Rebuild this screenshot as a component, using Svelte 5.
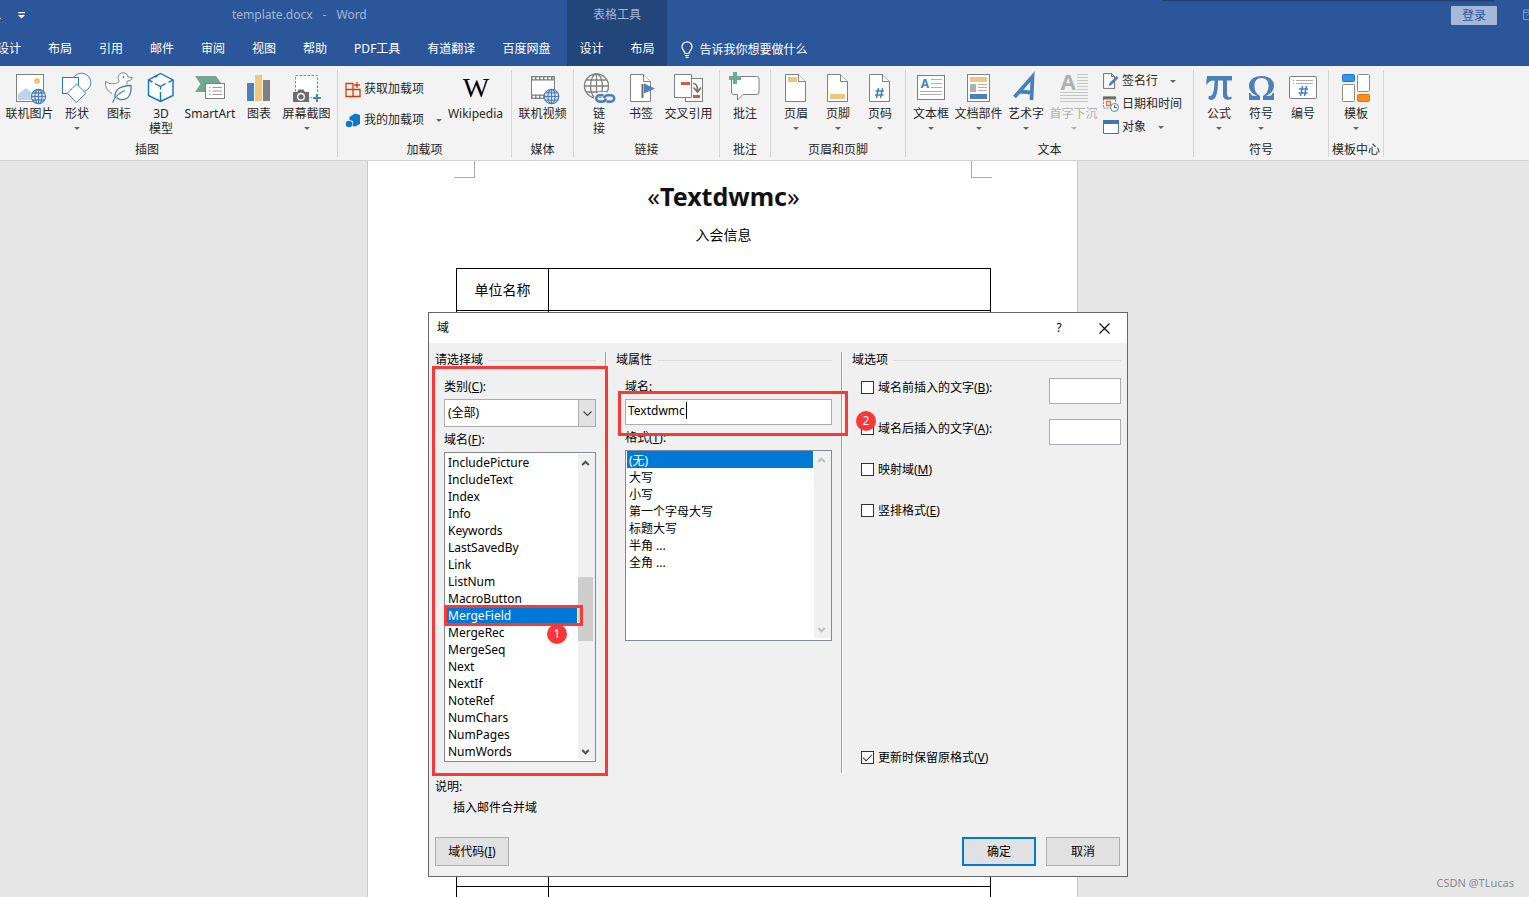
<script>
  const tabs = ['设计', '布局', '引用', '邮件', '审阅', '视图', '帮助', 'PDF工具', '有道翻译', '百度网盘'];
  const contextTabs = ['设计', '布局'];

  const groups = [
    { name: '插图', first: true, items: [
      { icon: 'onlinepic', label: ['联机图片'], size: 'wide' },
      { icon: 'shapes', label: ['形状'], arrow: true },
      { icon: 'duck', label: ['图标'] },
      { icon: 'cube', label: ['3D', '模型'] },
      { icon: 'smartart', label: ['SmartArt'], size: 'xwide' },
      { icon: 'chart', label: ['图表'] },
      { icon: 'shot', label: ['屏幕截图'], size: 'wide', arrow: true }
    ] },
    { name: '加载项', small: 'addins', items: [
      { icon: 'wiki', label: ['Wikipedia'], size: 'addin' }
    ] },
    { name: '媒体', items: [{ icon: 'video', label: ['联机视频'], size: 'wide' }] },
    { name: '链接', items: [
      { icon: 'link', label: ['链', '接'] },
      { icon: 'bookmark', label: ['书签'] },
      { icon: 'crossref', label: ['交叉引用'], size: 'wide' }
    ] },
    { name: '批注', items: [{ icon: 'comment', label: ['批注'] }] },
    { name: '页眉和页脚', items: [
      { icon: 'header', label: ['页眉'], arrow: true },
      { icon: 'footer', label: ['页脚'], arrow: true },
      { icon: 'pagenum', label: ['页码'], arrow: true }
    ] },
    { name: '文本', smallAfter: 'text', items: [
      { icon: 'textbox', label: ['文本框'], arrow: true },
      { icon: 'parts', label: ['文档部件'], size: 'wide', arrow: true },
      { icon: 'wordart', label: ['艺术字'], arrow: true },
      { icon: 'dropcap', label: ['首字下沉'], size: 'wide', arrow: true, off: true }
    ] },
    { name: '符号', items: [
      { icon: 'pi', label: ['公式'], arrow: true },
      { icon: 'omega', label: ['符号'], arrow: true },
      { icon: 'number', label: ['编号'] }
    ] },
    { name: '模板中心', items: [{ icon: 'template', label: ['模板'], size: 'tmpl', arrow: true }] }
  ];

  const fields = ['IncludePicture', 'IncludeText', 'Index', 'Info', 'Keywords', 'LastSavedBy', 'Link', 'ListNum',
    'MacroButton', 'MergeField', 'MergeRec', 'MergeSeq', 'Next', 'NextIf', 'NoteRef', 'NumChars', 'NumPages', 'NumWords'];
  const formats = ['(无)', '大写', '小写', '第一个字母大写', '标题大写', '半角 ...', '全角 ...'];
  const rows = Array.from({ length: 13 }, (_, i) => i);

  let field = $state('MergeField');
  let format = $state('(无)');
  let fieldName = $state('Textdwmc');
  let keep = $state(true);
</script>

{#snippet globe(cx, cy, r, color)}
  <g fill="#fff" stroke={color} stroke-width="1.3">
    <circle {cx} {cy} {r} />
    <ellipse {cx} {cy} rx={r * 0.5} ry={r} />
    <path fill="none" d="M{cx - r} {cy}h{2 * r}M{cx - r * 0.86} {cy - r * 0.5}h{r * 1.72}M{cx - r * 0.86} {cy + r * 0.5}h{r * 1.72}M{cx} {cy - r}v{2 * r}" />
  </g>
{/snippet}

{#snippet sheet()}
  <path d="M5.500 2.500h13l7 7v20h-20z" fill="#fff" stroke="#7f7f7f" />
  <path d="M18.500 2.500v7h7" fill="#fff" stroke="#7f7f7f" />
{/snippet}

{#snippet icon(name)}
  <svg class="ico" viewBox="0 0 32 32" aria-hidden="true">
    {#if name === 'onlinepic'}
      <rect x="2.500" y="2.500" width="27" height="27" fill="#fff" stroke="#7f7f7f" />
      <circle cx="23" cy="9" r="3" fill="#ecc77f" />
      <path d="M4 28v-6l8-6 6 5v7z" fill="#c0d3e8" />
      {@render globe(24.5, 24.5, 7, '#4a81ba')}
    {:else if name === 'shapes'}
      <circle cx="20.500" cy="10.500" r="9.300" fill="#fff" stroke="#4a81ba" />
      <rect x="1.500" y="5.500" width="16" height="16" fill="#fff" stroke="#2e75b6" />
      <path d="M15.500 12l9.300 9.300-9.300 9.200-9.300-9.200z" fill="#fff" stroke="#4a81ba" />
    {:else if name === 'duck'}
      <path d="M9 21.500C4 19 2 14.500 2.500 9.500c4 2.800 8 2.700 11.500 1.500 2-.6 2.500-1.500 1.500-3.500C14 3.500 17 .8 20 .8c3 0 4.700 1.900 5 4.200l4.300.6c-.5 2.200-2.300 3.400-4.500 3.100-1.200 1.500-1.200 2.500-.5 4" fill="#fff" stroke="#7f7f7f" />
      <circle cx="20.500" cy="5" r=".9" fill="#7f7f7f" />
      <path d="M12 25.500C11.500 17 17 14 28 13.500c.5 8-2 14-9 14.200-2.500 0-4-.7-5.500-2.200" fill="#fff" stroke="#4a81ba" stroke-width="1.300" />
      <path d="M9.500 30.500c2.500-6 6-9.500 12.500-12" fill="none" stroke="#4a81ba" stroke-width="1.300" />
    {:else if name === 'cube'}
      <path d="M15.500 1.500L28 8v15.500L15.500 29.500 3.500 23.500V8z" fill="#fff" stroke="#0f71c5" stroke-width="1.400" />
      <path d="M3.500 8l4 2M10 11.500l5.500 3 5-2.800M23.500 10.300L28 8M15.500 14.500v3M15.500 20v9.500M10 5l2.500-1.200" fill="none" stroke="#0f71c5" stroke-width="1.400" />
    {:else if name === 'smartart'}
      <path d="M1 4h21l5 7v2H12v7H1l5.500-8z" fill="#71a793" />
      <rect x="11.500" y="11.500" width="19" height="15" fill="#fff" stroke="#7f7f7f" />
      <path d="M15 15.500h1.500M18.500 15.500H28M15 19h1.500M18.500 19H28M15 22.500h1.500M18.500 22.500H28" stroke="#9a9a9a" />
    {:else if name === 'chart'}
      <path d="M4 11h7v18H4z" fill="#4a81ba" /><path d="M12 3h7v26h-7z" fill="#edc87e" /><path d="M20 8h7v21h-7z" fill="#7f7f7f" />
    {:else if name === 'shot'}
      <rect x="4.500" y="3.500" width="22" height="22" fill="#fff" stroke="#8a8a8a" stroke-dasharray="2.500 1.500" />
      <path d="M2 20h4l1.500-2.500h5L14 20h4v10H2z" fill="#6d6d6d" />
      <circle cx="10" cy="24.800" r="3.300" fill="#6d6d6d" stroke="#fff" stroke-width="1.300" />
      <path d="M26 21v10M21 26h10" stroke="#f3f3f3" stroke-width="4" /><path d="M26 22v8M22 26h8" stroke="#4a81ba" stroke-width="2" />
    {:else if name === 'wiki'}
      <text x="16" y="25" text-anchor="middle" font-family="Liberation Serif, serif" font-size="28" fill="#000">W</text>
    {:else if name === 'video'}
      <rect x="4.500" y="4.500" width="23" height="22" fill="#fff" stroke="#7f7f7f" />
      <path d="M4 4h24v4.500H4zM4 22.500h24V27H4z" fill="#7f7f7f" />
      <path d="M5.500 6.300h21M5.500 24.800h21" stroke="#fff" stroke-width="2" stroke-dasharray="2.500 1.500" />
      {@render globe(24.5, 24.5, 7.2, '#4a81ba')}
    {:else if name === 'link'}
      {@render globe(13.5, 14, 12, '#7f7f7f')}
      <g fill="none" stroke="#f3f3f3" stroke-width="5"><rect x="13.500" y="22.500" width="10" height="6.500" rx="3.200" /><rect x="20.500" y="22.500" width="10" height="6.500" rx="3.200" /></g>
      <g fill="none" stroke="#4a81ba" stroke-width="2.600"><path d="M20.500 23.200h-4a3.200 3.200 0 0 0 0 6.400h3c2 0 3-1.400 3.500-3" /><path d="M23.500 29.600h4.500a3.200 3.200 0 0 0 0-6.400h-3.500c-2 0-3 1.400-3.500 3" /></g>
    {:else if name === 'bookmark'}
      {@render sheet()}
      <path d="M17.500 12v14" stroke="#6d6d6d" stroke-width="2" /><path d="M19 11.500l11 5-11 5z" fill="#4a81ba" />
    {:else if name === 'crossref'}
      <rect x="12.500" y="6.500" width="17" height="23" fill="#fff" stroke="#7f7f7f" />
      <path d="M1.500 2.500h17v23h-17z" fill="#fff" stroke="#7f7f7f" />
      <path d="M8 10h9v3H8zM20 23h7v3h-7z" fill="#d5593b" />
      <path d="M20 11.500c3.500 0 4.500 2 4.500 7M20.500 15.500l4 4.500 3.500-4.500" fill="none" stroke="#6d6d6d" stroke-width="1.700" />
    {:else if name === 'comment'}
      <path d="M5 4.500h22.500a2.500 2.500 0 0 1 2.500 2.500v13a2.500 2.500 0 0 1-2.500 2.500H14l-5.500 5.500v-5.500H5a2.500 2.500 0 0 1-2.500-2.500V7A2.500 2.500 0 0 1 5 4.500z" fill="#fff" stroke="#7f7f7f" />
      <path d="M4 0h4v4h4v4H8v4H4V8H0V4h4z" fill="#71a793" />
    {:else if name === 'header'}
      {@render sheet()}<path d="M8 5h9v5H8z" fill="#ecc77f" />
    {:else if name === 'footer'}
      {@render sheet()}<path d="M8 22h15v5H8z" fill="#ecc77f" />
    {:else if name === 'pagenum'}
      {@render sheet()}<path d="M14.500 16l-2 10M18.500 16l-2 10M11.500 19h8.500M11 23h8.500" fill="none" stroke="#4a81ba" stroke-width="1.500" />
    {:else if name === 'textbox'}
      <rect x="2.500" y="3.500" width="27" height="24" fill="#fff" stroke="#7f7f7f" />
      <text x="10" y="16" text-anchor="middle" font-family="Noto Sans, sans-serif" font-weight="700" font-size="12" fill="#4a81ba">A</text>
      <path d="M16 7.500h11M16 11.500h11M16 15.500h11M5 19.500h22M5 22.500h22" stroke="#b0b0b0" />
    {:else if name === 'parts'}
      <rect x="4.500" y="2.500" width="22" height="27" fill="#fff" stroke="#7f7f7f" />
      <path d="M7 5h17v5H7z" fill="#ecc77f" /><path d="M7 12h6v8H7z" fill="#b0b0b0" /><path d="M7 22h17v5H7z" fill="#4a81ba" />
      <path d="M15 12.500h9M15 15.500h9M15 18.500h9" stroke="#b0b0b0" />
    {:else if name === 'wordart'}
      <path d="M4.500 25L22.500 4.500 21.500 28M9 19.500l13 1" fill="none" stroke="#4a81ba" stroke-width="3.800" />
    {:else if name === 'dropcap'}
      <text x="10" y="18" text-anchor="middle" font-family="Noto Sans, sans-serif" font-weight="700" font-size="22" fill="#b0b0b0">A</text>
      <path d="M19 2.500h11M19 5.500h11M19 8.500h11M19 11.500h11M19 14.500h11M19 17.500h11M2 20.500h28M2 23.500h28M2 26.500h28M2 29.500h28" stroke="#c4c4c4" />
    {:else if name === 'pi'}
      <path d="M4 4h25v4.500h-5V22c0 3 2 4 4.500 2.500v2.300c-4 2.200-8.500.8-8.500-4V8.500h-5C15 18 14 28 8.500 28 6 28 4.500 26 6 24c4 1 5.500-6 5.500-15.500C8 8.500 6 9 4 12.500H3z" fill="#4a81ba" />
    {:else if name === 'omega'}
      <path d="M4 28v-7h1.500c.5 2 1.500 3 3.500 3h3C7 21.500 4 18.500 4 13.500 4 8 9 4 16.500 4S29 8 29 13.500c0 5-3 8-8 10.500h3c2 0 3-1 3.500-3H29v7H18v-4c4-2.500 5.500-5.500 5.500-10.500 0-4.500-2.500-7.500-7-7.500s-7 3-7 7.500c0 5 1.500 8 5.500 10.500v4z" fill="#4a81ba" />
    {:else if name === 'number'}
      <rect x="2.500" y="4.500" width="27" height="22" rx="1.500" fill="#fff" stroke="#7f7f7f" />
      <path d="M6 8.500h1M9 8.500h17M6 11.500h1M9 11.500h17" stroke="#b0b0b0" />
      <path d="M15.500 14l-2 10M19.500 14l-2 10M12 17h9M11.500 21h9" fill="none" stroke="#4a81ba" stroke-width="1.500" />
    {:else if name === 'template'}
      <rect x="2.500" y="2.500" width="12" height="7" rx="1" fill="#3d93ea" stroke="#1876d2" /><rect x="17.500" y="2.500" width="12" height="17" rx="1" fill="#fff" stroke="#8a8a8a" />
      <rect x="2.500" y="12.500" width="12" height="17" rx="1" fill="#fff" stroke="#8a8a8a" /><rect x="17.500" y="22.500" width="12" height="7" rx="1" fill="#ff8c1a" stroke="#e8720c" />
    {/if}
  </svg>
{/snippet}

{#snippet chevron(up)}
  <svg class="chev" viewBox="0 0 9 9" aria-hidden="true"><path d={up ? 'M1.200 6l3.300-3.300L7.800 6' : 'M1.200 3l3.300 3.300L7.800 3'} fill="none" stroke="currentColor" stroke-width="2" /></svg>
{/snippet}

{#snippet big(it)}
  <button class={['big', it.size, it.off && 'off']} disabled={it.off}>
    {@render icon(it.icon)}
    {#each it.label as line}<span>{line}</span>{/each}
    {#if it.arrow}<i class="arrow"></i>{/if}
  </button>
{/snippet}

<div class="app">
  <header>
    <div class="main">
      <div class="qat">
        <svg viewBox="0 0 26 12" width="26" height="12" aria-hidden="true"><path d="M0 9h1v1H0zM18 3h7v1.300h-7zM18 6h7l-3.500 3.500z" fill="#fff" /></svg>
        <div class="doc"><span>template.docx</span><span>-</span><span>Word</span></div>
      </div>
      <nav class="tabs">{#each tabs as t}<button>{t}</button>{/each}</nav>
    </div>
    <div class="context">
      <span>表格工具</span>
      <nav class="tabs">{#each contextTabs as t}<button>{t}</button>{/each}</nav>
    </div>
    <div class="rest">
      <button class="tell">
        <svg viewBox="0 0 12 17" width="12" height="17" aria-hidden="true"><path d="M4 12.500c0-2.500-3-3.500-3-6.700a5 5 0 0 1 10 0c0 3.200-3 4.200-3 6.700zM4 14.500h4M4.500 16.300h3" fill="none" stroke="#fff" stroke-width="1.200" /></svg>
        告诉我你想要做什么
      </button>
      <button class="login">登录</button>
      <svg class="winopt" viewBox="0 0 6 12" width="6" height="12" aria-hidden="true"><path d="M6 1H.500v9.500H6M.500 3.500H6M3.500 7L6 4.800" fill="none" stroke="#7f9bc8" /></svg>
    </div>
    <div class="shade"></div>
  </header>

  <div class="ribbon">
    {#each groups as g}
      <section class={['group', g.first && 'first']}>
        <div class="items">
          {#if g.small === 'addins'}
            <div class="smalls addins">
              <button><svg viewBox="0 0 16 16" aria-hidden="true"><path d="M1 2.500h7v13H1zM1 8.500h14v7H1M12 1v6M9 4h6" fill="none" stroke="#d83b01" stroke-width="1.300" /></svg>获取加载项</button>
              <button><svg viewBox="0 0 16 16" aria-hidden="true"><path d="M4.500 5l5.500-3.500L15 3v9l-5 2.500L7.500 14 8 9 4.500 8z" fill="#0f78ca" /><circle cx="4" cy="12" r="3.200" fill="#0f78ca" /></svg>我的加载项<i class="arrow"></i></button>
            </div>
          {/if}
          {#each g.items as it}{@render big(it)}{/each}
          {#if g.smallAfter}
            <div class="smalls">
              <button><svg viewBox="0 0 16 16" aria-hidden="true"><path d="M.600.600h8l3 3v11.800H.600z" fill="#fff" stroke="#6d6d6d" /><path d="M8.500.600v3h3" fill="none" stroke="#6d6d6d" /><path d="M5.500 13l1-3 7-7 2 2-7 7z" fill="#4a81ba" /></svg>签名行<i class="arrow"></i></button>
              <button><svg viewBox="0 0 16 16" aria-hidden="true"><path d="M.600 1h12v11H.600z" fill="#fff" stroke="#7f7f7f" stroke-dasharray="2 1" /><path d="M0 .500h13v3H0z" fill="#6d6d6d" /><path d="M3.500 5.500h4v4h-4z" fill="none" stroke="#e07030" stroke-width="1.300" /><circle cx="11.500" cy="11.500" r="4" fill="#fff" stroke="#4a81ba" /><path d="M11.500 9v2.700H14" fill="none" stroke="#555" /></svg>日期和时间</button>
              <button><svg viewBox="0 0 16 16" aria-hidden="true"><path d="M.500 1.500h15v13H.500z" fill="#fff" stroke="#3f74ad" /><path d="M0 1h16v4H0z" fill="#3f74ad" /></svg>对象<i class="arrow"></i></button>
            </div>
          {/if}
        </div>
        <div class="gname">{g.name}</div>
      </section>
    {/each}
  </div>

  <main>
    <article class="page">
      <div class="corners"><i class="l"></i><i class="r"></i></div>
      <h1><span>«</span>Textdwmc<span>»</span></h1>
      <p>入会信息</p>
      <table>
        <tbody>
          <tr class="head"><th>单位名称</th><td></td></tr>
          {#each rows as r (r)}<tr><th></th><td></td></tr>{/each}
        </tbody>
      </table>
    </article>

    <div class="dialog" role="dialog" aria-labelledby="dlg-title">
      <div class="titlebar">
        <span id="dlg-title">域</span>
        <button aria-label="帮助">?</button>
        <button aria-label="关闭"><svg viewBox="0 0 11 11" width="11" height="11"><path d="M.500.500l10 10M10.500.500l-10 10" stroke="#000" stroke-width="1.100" /></svg></button>
      </div>
      <div class="body">
        <div class="cols">
          <section class="c1">
            <h2>请选择域</h2>
            <div class="inner">
              <label for="cat">类别(<u>C</u>):</label>
              <div class="combo">
                <select id="cat"><option>(全部)</option></select>
                <span><svg viewBox="0 0 9 9" width="9" height="9" aria-hidden="true"><path d="M.500 2.500l4 4 4-4" fill="none" stroke="#444" stroke-width="1.100" /></svg></span>
              </div>
              <label for="fields">域名(<u>F</u>):</label>
              <div class="list tall">
                <select id="fields" size="18" bind:value={field}>{#each fields as f}<option>{f}</option>{/each}</select>
                <div class="bar">{@render chevron(true)}<i></i>{@render chevron(false)}</div>
              </div>
            </div>
          </section>
          <div class="sep"></div>
          <section class="c2">
            <h2>域属性</h2>
            <div class="inner">
              <label for="fname">域名:</label>
              <div class="caretbox"><input id="fname" type="text" bind:value={fieldName} /><i></i></div>
              <label for="fmt">格式(<u>T</u>):</label>
              <div class="list short">
                <select id="fmt" size="11" bind:value={format}>{#each formats as f}<option>{f}</option>{/each}</select>
                <div class="bar dim">{@render chevron(true)}{@render chevron(false)}</div>
              </div>
            </div>
          </section>
          <div class="sep"></div>
          <section class="c3">
            <h2>域选项</h2>
            <div class="opts">
              <div class="opt"><label><input type="checkbox" />域名前插入的文字(<u>B</u>):</label><input type="text" aria-label="域名前插入的文字" /></div>
              <div class="opt"><label><input type="checkbox" />域名后插入的文字(<u>A</u>):</label><input type="text" aria-label="域名后插入的文字" /></div>
              <div class="opt"><label><input type="checkbox" />映射域(<u>M</u>)</label></div>
              <div class="opt"><label><input type="checkbox" />竖排格式(<u>E</u>)</label></div>
              <div class="opt last"><label><input type="checkbox" bind:checked={keep} />更新时保留原格式(<u>V</u>)</label></div>
            </div>
          </section>
        </div>
        <div class="desc"><span>说明:</span><p>插入邮件合并域</p></div>
        <div class="actions">
          <button>域代码(<u>I</u>)</button>
          <button class="ok">确定</button>
          <button>取消</button>
        </div>
      </div>
      <div class="mark m1"></div>
      <div class="mark m2"></div>
      <div class="mark m3"></div>
      <b class="badge b1">1</b>
      <b class="badge b2">2</b>
    </div>
    <span class="credit">CSDN @TLucas</span>
  </main>
</div>

<style>
  :global(body) { margin: 0; overflow: hidden; }
  .app {
    height: 100vh; display: flex; flex-direction: column; overflow: hidden;
    font: 12px/16px "Noto Sans", "Noto Sans CJK SC", sans-serif; color: #262626;
  }
  .app :global(*) { box-sizing: border-box; }
  button, select, input { font: inherit; color: inherit; }
  button { border: 0; background: none; padding: 0; white-space: nowrap; }
  h1, h2, p { margin: 0; font-weight: 400; }
  i { font-style: normal; }
  svg { display: block; flex: none; overflow: visible; }

  header { position: relative; flex: none; display: flex; height: 66px; background: #2b579a; color: #fff; overflow: hidden; }
  .main, .context { display: flex; flex-direction: column; justify-content: space-between; }
  .main { padding: 7px 17px 9px 0; }
  .qat { display: flex; align-items: center; }
  .doc { flex: 1; display: flex; gap: 10px; margin-left: 206px; color: #a3b6d5; }
  .tabs { display: flex; gap: 27px; margin-left: -3px; }
  .context { padding: 7px 13px 9px 12px; background: #22457a; align-items: center; }
  .context span { color: #a3b6d5; }
  .context .tabs { margin: 0; }
  .rest { flex: 1; display: flex; align-items: flex-start; padding: 6px 0 0 14px; }
  .tell { display: flex; align-items: center; gap: 6px; padding-top: 35px; }
  .login { margin-left: auto; margin-right: 26px; width: 46px; height: 19px; line-height: 19px; background: #a5b8d7; color: #2b579a; border-radius: 1px; }
  .winopt { margin-top: 3px; }
  .shade { position: absolute; right: 34px; top: 0; width: 332px; height: 1px; background: #1f3f70; box-shadow: 0 0 2px #1f3f70; }

  .ribbon { flex: none; display: flex; height: 95px; background: #f3f3f3; border-bottom: 1px solid #d2d2d2; padding-top: 4px; }
  .group { display: flex; flex-direction: column; height: 87px; padding: 0 4px; border-right: 1px solid #d4d4d4; }
  .first { margin-left: -43px; padding-left: 46px; }
  .items { flex: 1; display: flex; justify-content: flex-end; padding-top: 2px; }
  .gname { text-align: center; line-height: 15px; white-space: nowrap; margin: 0 -4px; }
  .first .gname { margin-left: -46px; }
  .big { width: 42px; flex: none; display: flex; flex-direction: column; align-items: center; line-height: 15px; }
  .big .ico { width: 32px; height: 32px; margin-bottom: 2px; }
  .wide { width: 53px; }
  .xwide { width: 56px; }
  .addin { width: 63px; }
  .tmpl { width: 46px; }
  .off { color: #b1b1b1; }
  .arrow { width: 0; height: 0; border: 3px solid transparent; border-top-color: #666; border-bottom: 0; }
  .big .arrow { margin-top: 6px; }
  .off .arrow { border-top-color: #b1b1b1; }
  .smalls { display: flex; flex-direction: column; gap: 7px; padding: 1px 7px 0 3px; }
  .smalls button { display: flex; align-items: center; gap: 3px; height: 16px; }
  .smalls svg { width: 16px; height: 16px; }
  .smalls .arrow { margin-left: 9px; }
  .addins { gap: 15px; padding: 9px 2px 0 3px; }

  main { position: relative; flex: 1; min-height: 0; overflow: hidden; background: #e6e6e6; padding: 0 451px 0 367px; }
  .page { background: #fff; border: 1px solid #c8c8c8; border-top: 0; text-align: center; color: #000; padding: 0 86px 0 88px; }
  .corners { display: flex; justify-content: space-between; margin: 0 -1px 0 -2px; }
  .corners i { width: 21px; height: 17px; border-bottom: 1px solid #ababab; }
  .corners .l { border-right: 1px solid #ababab; }
  .corners .r { border-left: 1px solid #ababab; }
  h1 { font-size: 25px; line-height: 32px; font-weight: 700; color: #111; padding-top: 2px; }
  h1 span { font-weight: 400; }
  .page p { font-size: 14px; line-height: 20px; padding-top: 13px; }
  table { width: 100%; margin-top: 23px; border-collapse: collapse; font-size: 14px; }
  th, td { height: 48px; border: 1px solid #000; padding: 0; font-weight: 400; }
  .head th, .head td { height: 42px; }
  th { width: 92px; }

  .dialog { position: absolute; left: 428px; top: 151px; width: 700px; background: #f0f0f0; border: 1px solid #666; color: #000; }
  .titlebar { display: flex; align-items: center; height: 30px; background: #fff; padding: 0 8px; }
  .titlebar span { flex: 1; }
  .titlebar button { width: 30px; height: 29px; display: grid; place-items: center; }
  .titlebar button + button { margin-left: 15px; }
  .body { padding: 9px 6px 10px; }
  .cols { display: flex; gap: 9px; height: 421px; }
  .sep { width: 2px; background: #a0a0a0; border-right: 1px solid #fff; }
  .c1 { width: 161px; }
  .c2 { width: 216px; }
  .c3 { flex: 1; display: flex; flex-direction: column; }
  h2 { display: flex; align-items: center; gap: 5px; font-size: 12px; line-height: 16px; }
  h2::after { content: ""; flex: 1; height: 1px; background: #dcdcdc; }
  .inner { display: flex; flex-direction: column; padding: 11px 0 0 9px; }
  .inner > label { height: 16px; }
  .combo { position: relative; margin: 4px 0 5px; height: 28px; }
  .combo select { width: 100%; height: 28px; appearance: none; background: #fff; border: 1px solid #adadad; border-radius: 0; padding: 0 3px; }
  .combo span { position: absolute; right: 0; top: 0; width: 18px; height: 28px; display: grid; place-items: center; background: #e1e1e1; border: 1px solid #adadad; pointer-events: none; }
  .list { display: flex; background: #fff; border: 1px solid #828790; padding: 1px 0 1px 1px; margin-top: 4px; }
  .tall { height: 310px; }
  .short { height: 191px; padding: 0 0 2px 1px; }
  .list select { flex: 1; min-width: 0; border: 0; border-radius: 0; outline: 0; padding: 0; overflow: hidden; background: #fff; scrollbar-width: none; }
  .list option { padding: 0 2px; height: 17px; min-height: 17px; line-height: 17px; }
  .list option:checked { background: linear-gradient(#0078d7, #0078d7); -webkit-text-fill-color: #fff; }
  .bar { width: 17px; display: flex; flex-direction: column; align-items: center; justify-content: space-between; background: #f0f0f0; padding: 5px 2px 4px 0; color: #505050; margin-left: 1px; }
  .bar i { width: 15px; height: 64px; background: #cdcdcd; margin: 109px 0 auto; }
  .dim { color: #bfbfbf; }
  .chev { width: 9px; height: 9px; }
  input[type="text"] { background: #fff; border: 1px solid #abadb3; height: 26px; padding: 0 2px 3px; outline: 0; border-radius: 0; }
  .caretbox { position: relative; margin: 4px 0 5px; height: 26px; }
  .caretbox input { width: 100%; display: block; }
  .caretbox i { position: absolute; left: 61px; top: 3px; width: 1px; height: 17px; background: #000; }
  .opts { flex: 1; display: flex; flex-direction: column; padding: 10px 0 6px 9px; }
  .opt { display: flex; justify-content: space-between; align-items: flex-start; height: 41px; }
  .opt label { display: flex; align-items: center; height: 19px; }
  .opt input[type="text"] { width: 72px; }
  .last { margin-top: auto; height: 19px; }
  input[type="checkbox"] { appearance: none; width: 13px; height: 13px; margin: 0 4px 0 0; border: 1px solid #333; background: #fff; display: grid; place-items: center; }
  input[type="checkbox"]:checked::before { content: ""; width: 8px; height: 4px; border: solid #333; border-width: 0 0 1px 1px; transform: rotate(-45deg); margin-bottom: 2px; }
  .desc { padding-top: 6px; }
  .desc span { display: block; }
  .desc p { padding: 5px 0 0 18px; }
  .actions { display: flex; gap: 10px; padding: 21px 1px 0 0; }
  .actions button { width: 74px; height: 29px; background: #e1e1e1; border: 1px solid #adadad; }
  .actions .ok { margin-left: auto; border: 2px solid #0078d7; }

  .mark { position: absolute; border: 3px solid #fb3838; pointer-events: none; }
  .m1 { left: 3px; top: 53px; width: 176px; height: 410px; }
  .m2 { left: 189px; top: 78px; width: 230px; height: 45px; }
  .m3 { left: 15px; top: 292px; width: 139px; height: 21px; }
  .badge { position: absolute; width: 20px; height: 20px; border-radius: 50%; background: #fb3838; color: #fff; font-weight: 400; line-height: 20px; text-align: center; }
  .b1 { left: 118px; top: 311px; }
  .b2 { left: 427px; top: 98px; }
  .credit { position: absolute; right: 15px; bottom: 6px; font-size: 11px; color: #8a8a8a; }
</style>
